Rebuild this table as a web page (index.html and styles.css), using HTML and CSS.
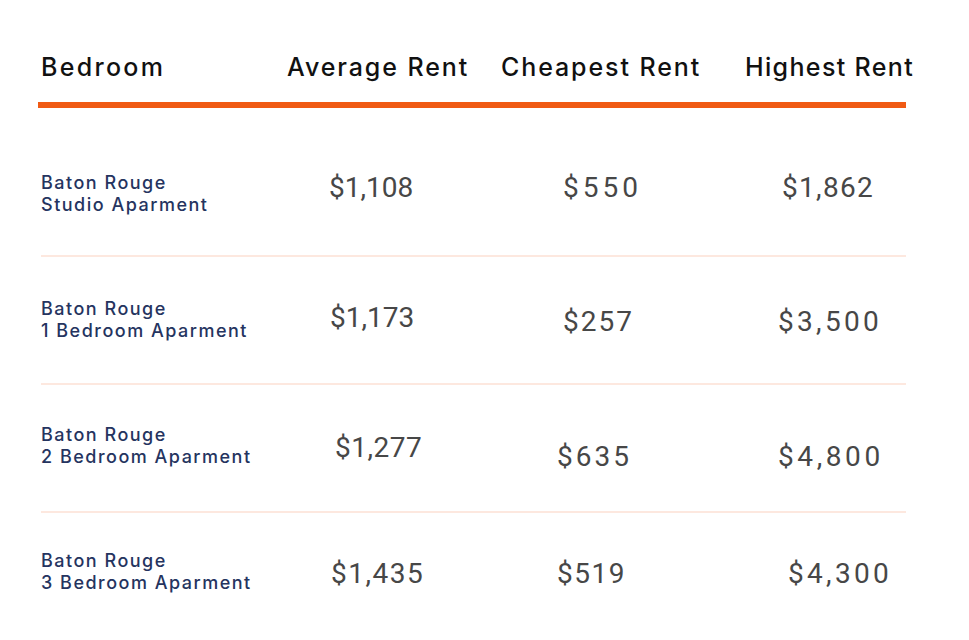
FILE: index.html
```html
<!DOCTYPE html>
<html lang="en">
<head>
<meta charset="utf-8">
<title>Baton Rouge Rent</title>
<link rel="stylesheet" href="styles.css">
</head>
<body>
<main class="table">
  <div class="head">
    <div class="th th-bed">Bedroom</div>
    <div class="th">Average Rent</div>
    <div class="th">Cheapest Rent</div>
    <div class="th th-high">Highest Rent</div>
  </div>
  <div class="rows">
    <div class="row r1">
      <div class="label">Baton Rouge<br>Studio Aparment</div>
      <div class="num">$1,108</div>
      <div class="num">$550</div>
      <div class="num">$1,862</div>
    </div>
    <div class="row r2">
      <div class="label">Baton Rouge<br>1 Bedroom Aparment</div>
      <div class="num">$1,173</div>
      <div class="num">$257</div>
      <div class="num">$3,500</div>
    </div>
    <div class="row r3">
      <div class="label">Baton Rouge<br>2 Bedroom Aparment</div>
      <div class="num">$1,277</div>
      <div class="num">$635</div>
      <div class="num">$4,800</div>
    </div>
    <div class="row r4">
      <div class="label">Baton Rouge<br>3 Bedroom Aparment</div>
      <div class="num">$1,435</div>
      <div class="num">$519</div>
      <div class="num">$4,300</div>
    </div>
  </div>
</main>
</body>
</html>
```

FILE: styles.css
```css
html, body {
  margin: 0;
  padding: 0;
  background: #ffffff;
}

body {
  width: 969px;
  height: 640px;
  overflow: hidden;
  font-family: Inter, "Noto Sans", sans-serif;
}

.table {
  display: flex;
  flex-direction: column;
  margin-left: 38px;
  width: 868px;
}

.head {
  display: grid;
  grid-template-columns: 246px 214px 244px 1fr;
  padding: 52px 0 20px 3px;
  border-bottom: 6px solid #f05a14;
}

.th {
  font-size: 25px;
  line-height: 30px;
  font-weight: 500;
  color: #111111;
  letter-spacing: 1.9px;
  white-space: nowrap;
}

.th-bed { letter-spacing: 2.3px; }
.th-high { letter-spacing: 1.35px; }

.rows {
  display: flex;
  flex-direction: column;
  margin-left: 3px;
  width: 865px;
}

.row {
  display: grid;
  grid-template-columns: 289px 227px 221px 1fr;
  align-items: start;
  box-sizing: border-box;
  height: 128px;
  border-bottom: 2px solid #fde8df;
}

.row.r1 { height: 149px; }
.row.r4 { height: 127px; border-bottom: none; }

.label {
  font-size: 18px;
  line-height: 22px;
  font-weight: 500;
  color: #25345f;
  letter-spacing: 1.5px;
  white-space: nowrap;
}

.num {
  font-family: Roboto, "Noto Sans", sans-serif;
  font-size: 28px;
  line-height: 34px;
  color: #474747;
  white-space: nowrap;
}

/* row 1 */
.r1 .label { margin-top: 64px; }
.r1 .num { margin-top: 63px; }
.r1 .num:nth-child(2) { margin-left: -1px; }
.r1 .num:nth-child(3) { margin-left: 6px; letter-spacing: 4px; }
.r1 .num:nth-child(4) { margin-left: 4px; letter-spacing: 1.3px; }

/* row 2 */
.r2 .label { margin-top: 41px; }
.r2 .num { margin-top: 48px; }
.r2 .num:nth-child(2) { margin-top: 44px; }
.r2 .num:nth-child(3) { margin-left: 6px; letter-spacing: 2px; }
.r2 .num:nth-child(4) { letter-spacing: 3.3px; }

/* row 3 */
.r3 .label { margin-top: 39px; }
.r3 .num { margin-top: 55px; }
.r3 .num:nth-child(2) { margin-top: 46px; margin-left: 5px; letter-spacing: 0.5px; }
.r3 .num:nth-child(3) { letter-spacing: 3px; }
.r3 .num:nth-child(4) { letter-spacing: 3.6px; }

/* row 4 */
.r4 .label { margin-top: 37px; }
.r4 .num { margin-top: 44px; }
.r4 .num:nth-child(2) { margin-left: 1px; letter-spacing: 1.5px; }
.r4 .num:nth-child(3) { letter-spacing: 1.5px; }
.r4 .num:nth-child(4) { margin-left: 10px; letter-spacing: 3.3px; }
```
